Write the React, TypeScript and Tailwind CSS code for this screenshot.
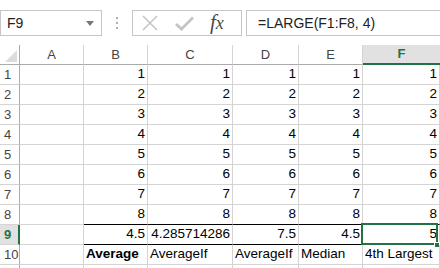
import React from 'react';

const COLS = ['A', 'B', 'C', 'D', 'E', 'F'];
const WIDTHS = ['w-[64px]', 'w-[64px]', 'w-[85px]', 'w-[66px]', 'w-[64px]', 'w-[77px]'];

const row9 = ['', '4.5', '4.285714286', '7.5', '4.5', '5'];
const row10 = ['', 'Average', 'AverageIf', 'AverageIf', 'Median', '4th Largest'];

const FormulaBar: React.FC = () => (
  <div className="h-[45px] flex items-start pt-[10px] bg-white">
    {/* Name box */}
    <div className="w-[102px] h-[26px] border border-[#c6c6c6] flex items-center justify-between pl-[6px] pr-[7px] text-[14px] text-[#222]">
      <span>F9</span>
      <svg width="8" height="5" viewBox="0 0 8 5">
        <path d="M0 0 H8 L4 5 Z" fill="#777" />
      </svg>
    </div>
    {/* grip dots */}
    <div className="w-[30px] h-[26px] flex flex-col items-center justify-center gap-[3px]">
      <div className="w-[2px] h-[2px] bg-[#b0b0b0]" />
      <div className="w-[2px] h-[2px] bg-[#b0b0b0]" />
      <div className="w-[2px] h-[2px] bg-[#b0b0b0]" />
    </div>
    {/* cancel / enter / fx */}
    <div className="w-[110px] h-[26px] border border-[#c6c6c6] flex items-center pl-[8px] gap-[16px]">
      <svg width="18" height="16" viewBox="0 0 18 16">
        <path d="M2 1 L16 15 M16 1 L2 15" stroke="#c4c4c4" strokeWidth="1.5" fill="none" />
      </svg>
      <svg width="19" height="15" viewBox="0 0 19 15">
        <path d="M1 8 L6.5 13 L18 1.5" stroke="#c4c4c4" strokeWidth="2.8" fill="none" />
      </svg>
      <span className="text-[21px] italic text-[#4a4a4a] leading-none -mt-[2px]" style={{ fontFamily: '"Liberation Serif", serif' }}>
        f<span className="text-[18px]">x</span>
      </span>
    </div>
    <div className="w-[4px]" />
    {/* formula input */}
    <div className="flex-1 h-[26px] border border-r-0 border-[#c6c6c6] flex items-center pl-[11px] text-[14px] text-[#222]">
      =LARGE(F1:F8, 4)
    </div>
  </div>
);

const App: React.FC = () => {
  const rows = Array.from({ length: 11 }, (_, i) => i + 1);

  return (
    <div className="w-[440px] h-[268px] overflow-hidden bg-white" style={{ fontFamily: '"Liberation Sans", Arial, sans-serif' }}>
      <FormulaBar />

      {/* column headers */}
      <div className="flex h-[20px]">
        <div className="w-[20px] h-[20px] border-r border-b border-[#ababab] relative">
          <svg className="absolute right-[2px] bottom-[2px]" width="12" height="12" viewBox="0 0 12 12">
            <path d="M12 0 V12 H0 Z" fill="#dcdcdc" />
          </svg>
        </div>
        {COLS.map((c, i) =>
          c === 'F' ? (
            <div key={c} className={`${WIDTHS[i]} shrink-0 h-[20px] bg-[#e1e1e1] border-b-2 border-[#217346] flex items-center justify-center text-[13px] font-bold text-[#217346]`}>
              {c}
            </div>
          ) : (
            <div key={c} className={`${WIDTHS[i]} shrink-0 h-[20px] border-r border-b border-r-[#d4d4d4] border-b-[#ababab] flex items-center justify-center text-[13px] text-[#444]`}>
              {c}
            </div>
          )
        )}
      </div>

      {rows.map((r) => (
        <div key={r} className="flex h-[20px]">
          {r === 9 ? (
            <div className="w-[20px] shrink-0 h-[20px] bg-[#e1e1e1] border-r-2 border-b border-r-[#217346] border-b-[#d4d4d4] flex items-center pl-[4px] text-[13px] font-bold text-[#217346]">
              {r}
            </div>
          ) : (
            <div className="w-[20px] shrink-0 h-[20px] border-r border-b border-r-[#ababab] border-b-[#d4d4d4] flex items-center pl-[4px] text-[13px] text-[#444]">
              {r <= 10 ? r : ''}
            </div>
          )}
          {COLS.map((c, i) => {
            const black = (r === 8 || r === 9) && i > 0;
            const borderB = black ? 'border-b-black' : 'border-b-[#d4d4d4]';
            let content = '';
            let align = 'justify-end pr-[2px]';
            let weight = '';
            if (r <= 8 && i > 0) content = String(r);
            if (r === 9) content = row9[i];
            if (r === 10) {
              content = row10[i];
              align = 'justify-start pl-[2px]';
              if (i === 1) weight = 'font-bold';
            }
            const selected = r === 9 && c === 'F';
            return (
              <div
                key={c}
                className={`${WIDTHS[i]} shrink-0 h-[20px] border-r border-b border-r-[#d4d4d4] ${borderB} flex items-center ${align} ${weight} text-[13.5px] text-black relative whitespace-nowrap`}
              >
                {content}
                {selected && (
                  <>
                    <div className="absolute -top-[2px] -left-[2px] right-[1px] -bottom-[1px] border-2 border-[#217346] pointer-events-none" />
                    <div className="absolute -right-[1px] -bottom-[4px] w-[6px] h-[6px] bg-[#217346] border border-white" />
                  </>
                )}
              </div>
            );
          })}
        </div>
      ))}
    </div>
  );
};

export default App;
